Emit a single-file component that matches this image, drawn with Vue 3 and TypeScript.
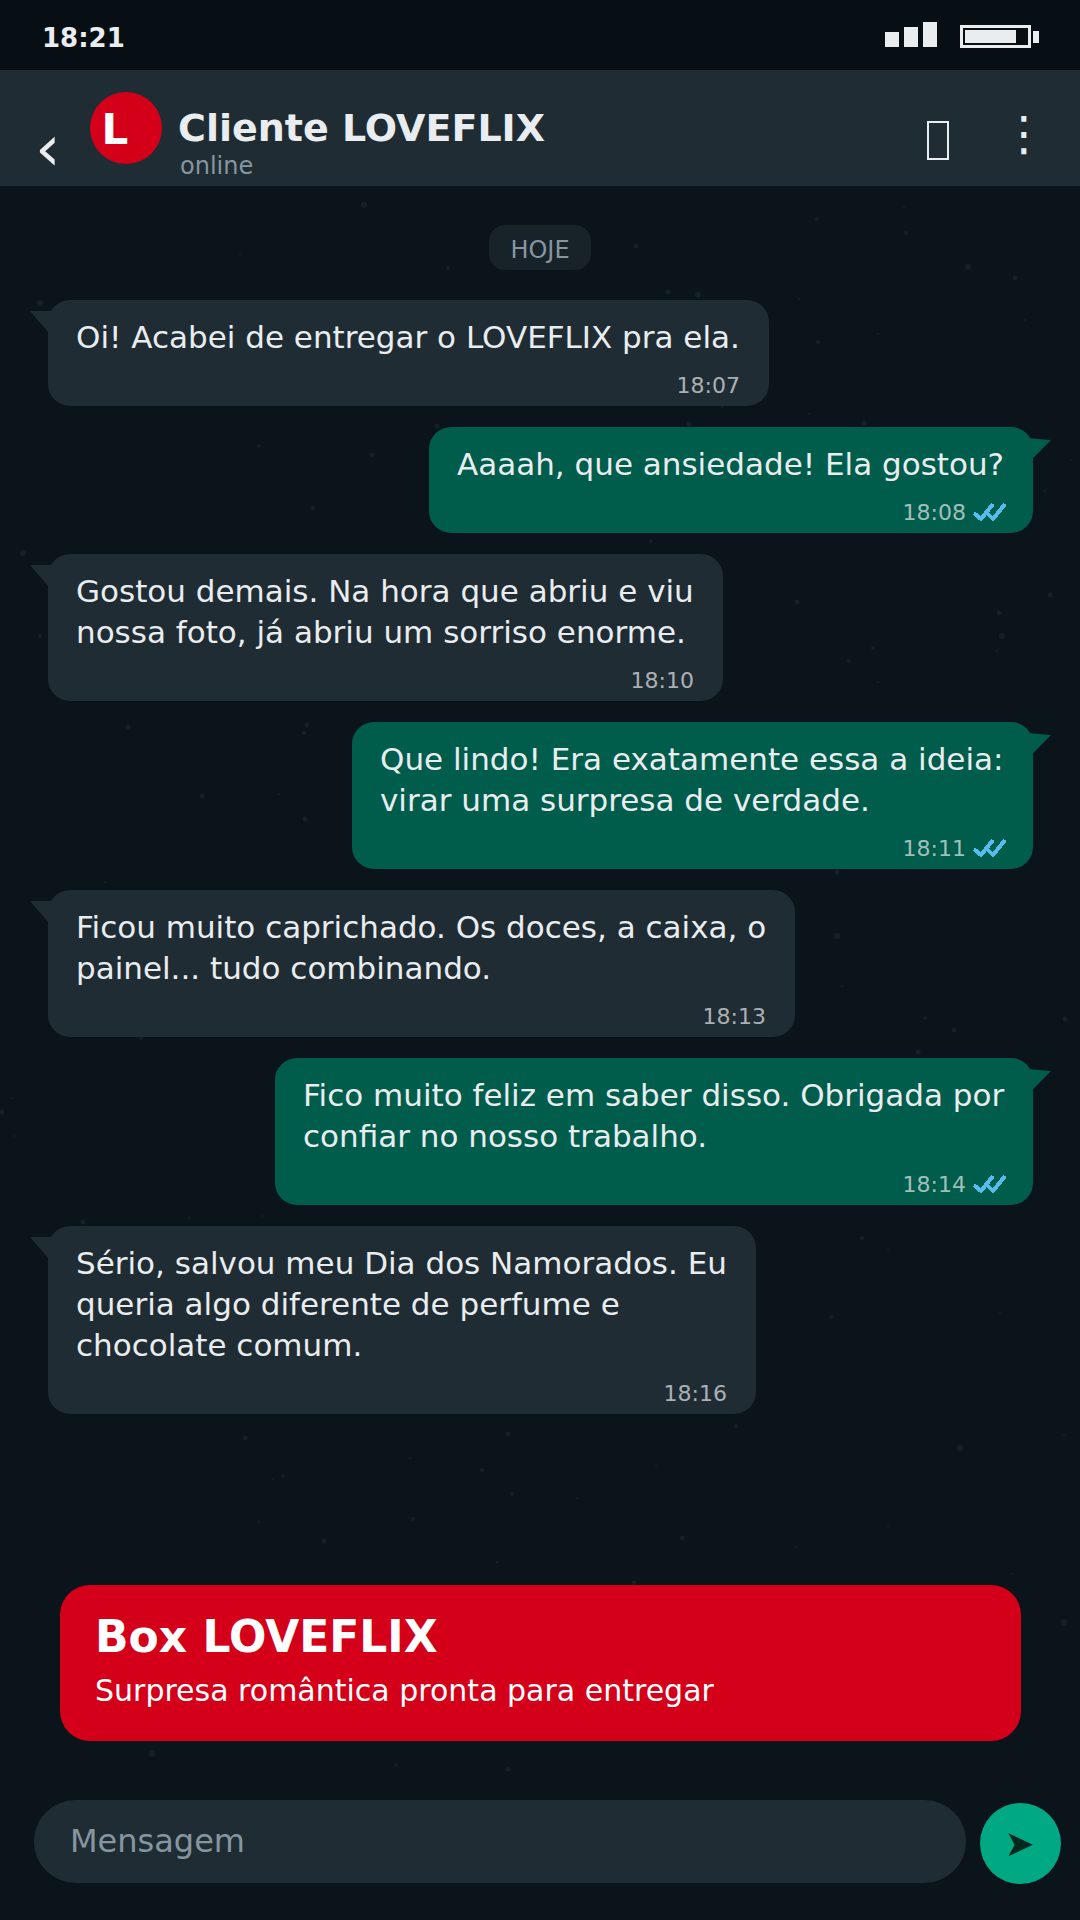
<script setup lang="ts">
interface Message {
  side: 'in' | 'out'
  lines: string
  time: string
  width: number
}

const messages: Message[] = [
  { side: 'in', lines: 'Oi! Acabei de entregar o LOVEFLIX pra ela.', time: '18:07', width: 721 },
  { side: 'out', lines: 'Aaaah, que ansiedade! Ela gostou?', time: '18:08', width: 604 },
  { side: 'in', lines: 'Gostou demais. Na hora que abriu e viu nossa foto, já abriu um sorriso enorme.', time: '18:10', width: 675 },
  { side: 'out', lines: 'Que lindo! Era exatamente essa a ideia: virar uma surpresa de verdade.', time: '18:11', width: 681 },
  { side: 'in', lines: 'Ficou muito caprichado. Os doces, a caixa, o painel... tudo combinando.', time: '18:13', width: 747 },
  { side: 'out', lines: 'Fico muito feliz em saber disso. Obrigada por confiar no nosso trabalho.', time: '18:14', width: 758 },
  { side: 'in', lines: 'Sério, salvou meu Dia dos Namorados. Eu queria algo diferente de perfume e chocolate comum.', time: '18:16', width: 708 },
]

const specks: [number, number, number][] = [
  [364,205,3],[817,219,2],[906,233,2],[636,246,2.5],[448,268,2],[968,267,3],[1015,278,2.5],[668,292,2.5],[698,295,3],[40,303,3],
  [799,299,1],[1025,320,1],[818,342,2],[437,426,2.5],[689,424,2.5],[864,423,2.5],[259,446,2],[372,455,2.5],[1071,460,1],[1045,491,1],
  [313,508,2],[651,541,2],[23,553,3],[1050,595,2.5],[797,602,2.5],[999,613,2.5],[40,636,2],[1002,636,3],[873,648,2],[997,651,1],
  [849,661,2],[878,682,1],[128,727,2.5],[307,725,2.5],[304,733,2],[809,414,1],[722,407,1],[904,207,1],[878,334,1],[240,254,1],
  [202,796,2.5],[279,794,1],[305,819,2.5],[105,882,1],[837,872,2.5],[837,936,3],[842,986,1],[925,1018,2],[954,1030,2.5],[1065,1019,2.5],
  [141,1038,2],[918,1052,2.5],[12,1098,1],[2,1112,2.5],[14,1136,1],[83,1222,2.5],[262,1216,1],[189,1218,1],[862,1238,2],[888,1250,1],
  [831,1317,2],[1000,1313,1],[245,1438,2.5],[508,1434,2.5],[736,1426,2],[960,1448,3],[1064,1435,1],[410,1458,1],[482,1470,2],[656,1466,1],
  [283,1476,2],[273,1479,1],[512,1494,2],[577,1498,1],[413,1519,2],[259,1522,1],[888,1526,1],[682,1538,2.5],[324,1541,2.5],[796,1547,1],
  [497,1562,1.5],[1012,1574,1],[634,1583,2.5],[1064,1622,3],[152,1754,3],[396,1765,2],[508,1769,2.5],
]
</script>

<template>
  <div class="page">
    <svg class="specks" viewBox="0 0 1080 1920" aria-hidden="true">
      <circle v-for="(s, i) in specks" :key="i" :cx="s[0]" :cy="s[1]" :r="s[2]" />
    </svg>

    <div class="status">
      <span class="clock">18:21</span>
      <div class="status-icons">
        <div class="signal">
          <i class="bar b1"></i>
          <i class="bar b2"></i>
          <i class="bar b3"></i>
        </div>
        <div class="battery">
          <div class="battery-body"><div class="battery-level"></div></div>
          <div class="battery-cap"></div>
        </div>
      </div>
    </div>

    <header class="header">
      <span class="back">‹</span>
      <div class="avatar">L</div>
      <div class="who">
        <div class="name">Cliente LOVEFLIX</div>
        <div class="presence">online</div>
      </div>
      <span class="tofu"></span>
      <span class="kebab">⋮</span>
    </header>

    <main class="chat">
      <div class="day">HOJE</div>
      <div class="thread">
        <div
          v-for="m in messages"
          :key="m.time"
          class="bubble"
          :class="m.side"
          :style="{ width: m.width + 'px' }"
        >
          <div class="text">{{ m.lines }}</div>
          <div class="meta">
            <span>{{ m.time }}</span>
            <svg v-if="m.side === 'out'" class="ticks" viewBox="0 0 34 18" width="34" height="18">
              <polyline points="2,10 9,16 21,1" />
              <polyline points="16,11 21,16 33,1" />
            </svg>
          </div>
        </div>
      </div>

      <section class="promo">
        <div class="promo-title">Box LOVEFLIX</div>
        <div class="promo-sub">Surpresa romântica pronta para entregar</div>
      </section>

      <div class="composer">
        <div class="input">Mensagem</div>
        <div class="send">➤</div>
      </div>
    </main>
  </div>
</template>

<style scoped>
.page {
  position: relative;
  width: 1080px;
  height: 1920px;
  display: flex;
  flex-direction: column;
  overflow: hidden;
  background: #0b141a;
  color: #e9edef;
  font-family: "DejaVu Sans", sans-serif;
}
.specks {
  position: absolute;
  inset: 0;
  width: 1080px;
  height: 1920px;
  fill: #14212a;
}
.status {
  position: relative;
  height: 70px;
  flex: none;
  display: flex;
  align-items: center;
  justify-content: space-between;
  padding: 0 41px 0 42px;
  background: #070e14;
}
.clock {
  margin-top: 6px;
  font-size: 26px;
  font-weight: 700;
}
.status-icons {
  display: flex;
  align-items: flex-end;
  gap: 23px;
}
.signal {
  display: flex;
  align-items: flex-end;
  gap: 5px;
  margin-bottom: 1px;
}
.bar {
  display: block;
  width: 14px;
  background: #e9edef;
}
.b1 { height: 15px; }
.b2 { height: 20px; }
.b3 { height: 25px; }
.battery {
  display: flex;
  align-items: center;
  gap: 2px;
}
.battery-body {
  width: 71px;
  height: 23px;
  box-sizing: border-box;
  border: 3px solid #e9edef;
  padding: 2px;
}
.battery-level {
  width: 51px;
  height: 100%;
  background: #e9edef;
}
.battery-cap {
  width: 6px;
  height: 12px;
  background: #e9edef;
}
.header {
  position: relative;
  height: 116px;
  flex: none;
  display: flex;
  align-items: center;
  background: #202c33;
}
.back {
  width: 16px;
  margin: 40px 0 0 35px;
  font-size: 64px;
  line-height: 64px;
  color: #e9edef;
}
.avatar {
  width: 72px;
  height: 72px;
  margin: 0 0 0 39px;
  border-radius: 50%;
  display: flex;
  align-items: center;
  justify-content: center;
  background: #d4001a;
  color: #fff;
  font-size: 42px;
  font-weight: 700;
  padding: 2px 22px 0 0;
  box-sizing: border-box;
}
.who {
  margin-left: 16px;
  flex: 1;
}
.name {
  font-size: 38px;
  font-weight: 700;
  line-height: 44px;
  margin-top: 30px;
}
.presence {
  font-size: 24px;
  line-height: 28px;
  color: #8696a0;
  margin: 2px 0 0 2px;
}
.tofu {
  width: 22px;
  height: 39px;
  box-sizing: border-box;
  border: 2px solid #e9edef;
  margin: 25px 0 0;
}
.kebab {
  width: 30px;
  margin: 10px 50px 0 51px;
  text-align: center;
  font-size: 48px;
  line-height: 48px;
}
.chat {
  position: relative;
  flex: 1;
  display: flex;
  flex-direction: column;
  min-height: 0;
}
.day {
  align-self: center;
  margin-top: 39px;
  padding: 0 21px;
  height: 45px;
  line-height: 50px;
  border-radius: 16px;
  background: #182229;
  color: #8696a0;
  font-size: 24px;
}
.thread {
  margin-top: 30px;
  display: flex;
  flex-direction: column;
  gap: 21px;
  padding: 0 47px 0 48px;
}
.bubble {
  position: relative;
  box-sizing: border-box;
  padding: 17px 28px 6px;
  border-radius: 22px;
  font-size: 31px;
  line-height: 41px;
}
.bubble.in {
  align-self: flex-start;
  background: #202c33;
}
.bubble.out {
  align-self: flex-end;
  background: #005c4b;
}
.bubble::before {
  content: "";
  position: absolute;
  top: 11px;
  width: 24px;
  height: 21px;
}
.bubble.in::before {
  left: -18px;
  background: #202c33;
  clip-path: polygon(0 0, 100% 0, 75% 100%);
}
.bubble.out::before {
  right: -18px;
  background: #005c4b;
  clip-path: polygon(0 0, 100% 10%, 22% 100%);
}
.text {
  color: #e9edef;
}
.meta {
  margin-top: 14px;
  height: 28px;
  display: flex;
  justify-content: flex-end;
  align-items: center;
  gap: 7px;
  font-size: 22px;
  line-height: 28px;
  color: rgba(233, 237, 239, 0.7);
}
.bubble.in .meta {
  padding-right: 1px;
}
.ticks {
  fill: none;
  stroke: #53bdeb;
  stroke-width: 4;
  margin: 0 -1px 2px -1px;
  shape-rendering: crispEdges;
}
.promo {
  margin: auto 59px 59px 60px;
  height: 156px;
  box-sizing: border-box;
  padding: 26px 35px;
  border-radius: 30px;
  background: #d4001a;
  color: #fff;
}
.promo-title {
  font-size: 44px;
  font-weight: 700;
  line-height: 52px;
}
.promo-sub {
  margin-top: 9px;
  font-size: 30px;
  line-height: 38px;
}
.composer {
  display: flex;
  align-items: flex-start;
  gap: 14px;
  padding: 0 19px 36px 34px;
}
.input {
  flex: 1;
  height: 83px;
  box-sizing: border-box;
  padding-left: 36px;
  border-radius: 42px;
  background: #202c33;
  color: #8696a0;
  font-size: 32px;
  line-height: 83px;
}
.send {
  width: 81px;
  height: 81px;
  margin-top: 3px;
  padding-right: 2px;
  box-sizing: border-box;
  border-radius: 50%;
  background: #00a884;
  color: #04291f;
  display: flex;
  align-items: center;
  justify-content: center;
  font-size: 36px;
}
</style>

<style>
html, body {
  margin: 0;
  background: #0b141a;
}
</style>
